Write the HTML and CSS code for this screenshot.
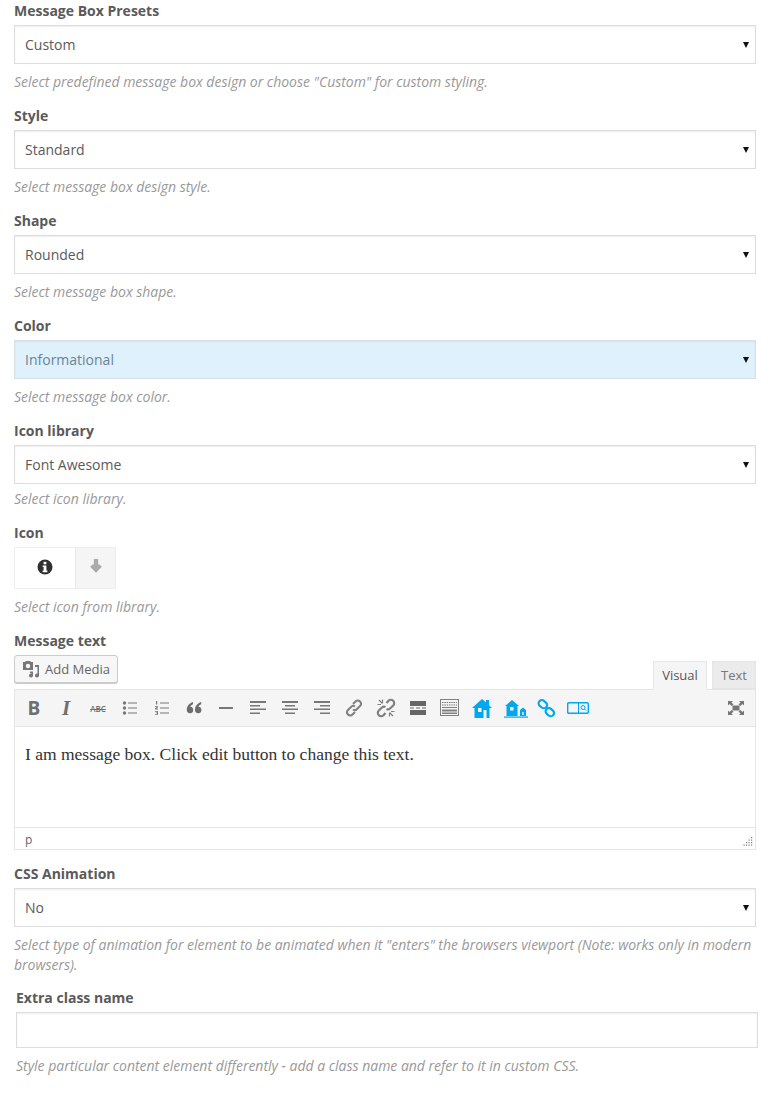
FILE: index.html
```html
<!DOCTYPE html>
<html lang="en">
<head>
    <meta charset="UTF-8">
    <meta name="viewport" content="width=device-width, initial-scale=1.0">
    <title>Message Box Settings</title>
    <link rel="stylesheet" href="styles.css">
</head>
<body>
    <form class="settings">
        <div class="field">
            <div class="label">Message Box Presets</div>
            <div class="select"><span>Custom</span><i class="caret"></i></div>
            <div class="hint">Select predefined message box design or choose "Custom" for custom styling.</div>
        </div>
        <div class="field">
            <div class="label">Style</div>
            <div class="select"><span>Standard</span><i class="caret"></i></div>
            <div class="hint">Select message box design style.</div>
        </div>
        <div class="field">
            <div class="label">Shape</div>
            <div class="select"><span>Rounded</span><i class="caret"></i></div>
            <div class="hint">Select message box shape.</div>
        </div>
        <div class="field">
            <div class="label">Color</div>
            <div class="select select_info"><span>Informational</span><i class="caret"></i></div>
            <div class="hint">Select message box color.</div>
        </div>
        <div class="field">
            <div class="label">Icon library</div>
            <div class="select"><span>Font Awesome</span><i class="caret"></i></div>
            <div class="hint hint_tight">Select icon library.</div>
        </div>
        <div class="field">
            <div class="label">Icon</div>
            <div class="icon_picker">
                <div class="icon_current">
                    <svg width="16" height="16" viewBox="0 0 16 16"><circle cx="8" cy="8" r="7.5" fill="#2f2f2f"/><rect x="6.6" y="2.8" width="2.8" height="2.5" fill="#fff"/><path d="M5.6 6.4h3.8v5.2h1v1.6H5.6v-1.6h1V8h-1z" fill="#fff"/></svg>
                </div>
                <div class="icon_toggle">
                    <svg width="16" height="16" viewBox="0 0 16 16"><path d="M5.8 1h4.400v5.500h1.300l2.300 2.300L8 14.800 2.200 8.800l2.300-2.300h1.300z" fill="#aaa"/></svg>
                </div>
            </div>
            <div class="hint">Select icon from library.</div>
        </div>
        <div class="field field_editor">
            <div class="label">Message text</div>
            <div class="editor_top">
                <button class="media_button" type="button">
                    <svg width="18" height="18" viewBox="0 0 18 18"><path d="M1 2h2l1-1h4l1 1h2v8H1z" fill="#777"/><circle cx="6" cy="6" r="2.2" fill="#f7f7f7"/><path d="M13 5h4v10.5a2 2 0 1 1-1.5-1.9V7h-2.500z" fill="#777"/><path d="M8 11.500h3v4a2 2 0 1 1-1.500-1.900V13H8z" fill="#777"/></svg>
                    Add Media
                </button>
                <div class="tabs">
                    <div class="tab tab_active">Visual</div>
                    <div class="tab">Text</div>
                </div>
            </div>
            <div class="editor">
                <div class="toolbar">
                    <span class="tool tool_b">B</span>
                    <span class="tool tool_i">I</span>
                    <span class="tool tool_abc">ABC</span>
                    <span class="tool"><svg width="16" height="16" viewBox="0 0 16 16" fill="#777"><circle cx="2.500" cy="3" r="1.700"/><circle cx="2.500" cy="8" r="1.700"/><circle cx="2.500" cy="13" r="1.700"/><path d="M6 2.500h9v1H6zM6 7.500h9v1H6zM6 12.500h9v1H6z"/></svg></span>
                    <span class="tool"><svg width="16" height="16" viewBox="0 0 16 16" fill="#777"><path d="M2 1h1.200v3.600H2zM1 6.200h3v1L2.400 8.600H4v.8H1v-.8l1.800-1.500V7H1zM1 11h3v3.800H1V14h2v-.8H1.800v-.6H3V11.800H1z"/><path d="M6 2.500h9v1H6zM6 7.500h9v1H6zM6 12.500h9v1H6z"/></svg></span>
                    <span class="tool"><svg width="16" height="14" viewBox="0 0 16 14" fill="#6c6c6c"><path d="M7 1C3.300 2.200.8 5 .8 9a3.200 3.200 0 1 0 3.400-3.200c.3-1 1.300-2 2.800-2.600zM15.200 1C11.500 2.200 9 5 9 9a3.200 3.200 0 1 0 3.400-3.200c.3-1 1.300-2 2.800-2.600z"/></svg></span>
                    <span class="tool"><svg width="14" height="14" viewBox="0 0 14 14" fill="#777"><rect y="6" width="14" height="2"/></svg></span>
                    <span class="tool"><svg width="16" height="14" viewBox="0 0 16 14" fill="#777"><path d="M0 0h16v2H0zM0 4h10v1.500H0zM0 7.500h16v1.500H0zM0 11.500h10V13H0z"/></svg></span>
                    <span class="tool"><svg width="16" height="14" viewBox="0 0 16 14" fill="#777"><path d="M0 0h16v2H0zM3 4h10v1.500H3zM0 7.500h16v1.500H0zM3 11.500h10V13H3z"/></svg></span>
                    <span class="tool"><svg width="16" height="14" viewBox="0 0 16 14" fill="#777"><path d="M0 0h16v2H0zM6 4h10v1.500H6zM0 7.500h16v1.500H0zM6 11.500h10V13H6z"/></svg></span>
                    <span class="tool"><svg width="18" height="18" viewBox="0 0 18 18" fill="none" stroke="#808080" stroke-width="2"><path d="M8 5l2.500-2.500a3 3 0 0 1 4.500 0 3.200 3.200 0 0 1 0 4.500L12 10a3 3 0 0 1-4 .5"/><path d="M10 13l-2.500 2.500a3 3 0 0 1-4.500 0 3.200 3.200 0 0 1 0-4.500L6 8a3 3 0 0 1 4-.5"/></svg></span>
                    <span class="tool"><svg width="20" height="20" viewBox="0 0 20 20" fill="none" stroke="#808080" stroke-width="2.200"><path d="M10.500 5l2-2.200a3.200 3.200 0 0 1 4.700 0 3.300 3.300 0 0 1 0 4.700L14 10.500a3 3 0 0 1-3.500.5"/><path d="M9.500 15l-2 2.200a3.200 3.200 0 0 1-4.700 0 3.300 3.300 0 0 1 0-4.700L6 9.500A3 3 0 0 1 9.500 9"/><path d="M3 2l3.500 3.500M1.500 6.500h3.500M6.500 1.500V5M17 18l-3.500-3.500M18.500 13.500H15M13.500 18.500V15" stroke-width="1.200"/></svg></span>
                    <span class="tool"><svg width="16" height="14" viewBox="0 0 16 14" fill="#666"><path d="M0 0h16v5H0zM0 9h16v5H0zM0 6.500h4v1H0zM6 6.500h4v1H6zM12 6.500h4v1h-4z"/></svg></span>
                    <span class="tool"><svg width="20" height="18" viewBox="0 0 20 18"><rect x=".5" y=".5" width="18" height="16" fill="none" stroke="#808080"/><path d="M2 3.500h15M2 6h15" stroke="#777" stroke-dasharray="1.500 .8" fill="none"/><path d="M2 8h15v1H2z" fill="#808080"/><path d="M2 10.500h15v2H2zM2 13.500h15V15H2z" fill="#808080"/></svg></span>
                    <span class="tool tool_blue"><svg width="20" height="19" viewBox="0 0 20 19" fill="#00a8ef"><path d="M10 0L0 9h2.500v10h15V9H20l-3-2.700V1h-3v2.600zM6 9h3.500v4H6zM11.500 11h3v8h-3z" fill-rule="evenodd"/></svg></span>
                    <span class="tool tool_blue tool_home2"><svg width="24" height="19" viewBox="0 0 24 19" fill="#00a8ef"><path d="M8 1L1 7h1.500v10h11V7H15zM6 8h3.500v3.500H6zM16 11l3-2.500 3 2.500v6h-6zM18.300 13v3h1.400v-3z" fill-rule="evenodd"/><rect y="17.500" width="24" height="1.200"/></svg></span>
                    <span class="tool tool_blue"><svg width="19" height="19" viewBox="0 0 19 19" fill="none" stroke="#00a8ef" stroke-width="2.200"><rect x="1.500" y="2" width="9" height="6.500" rx="3.200" transform="rotate(40 6 5)"/><rect x="8.500" y="10" width="9" height="6.500" rx="3.200" transform="rotate(40 13 13)"/></svg></span>
                    <span class="tool tool_blue"><svg width="22" height="12" viewBox="0 0 22 12" fill="none" stroke="#00a8ef"><rect x=".7" y=".7" width="20.600" height="10.600" rx="1" stroke-width="1.400"/><path d="M11.500 1v10" stroke-width="1"/><circle cx="16" cy="5.500" r="2" stroke-width="1"/><path d="M17.500 7l1.500 1.500" stroke-width="1"/></svg></span>
                    <span class="tool tool_full"><svg width="16" height="14" viewBox="0 0 16 14" fill="#777"><rect x="4.500" y="4.500" width="7" height="5"/><path d="M0 0h5L3.500 1.500 5.500 3.500 3.500 5 1.500 3 0 4.500zM16 0h-5l1.500 1.500-2 2L12.500 5l2-2L16 4.500zM0 14h5l-1.500-1.500 2-2L3.500 9l-2 2L0 9.500zM16 14h-5l1.500-1.500-2-2L12.500 9l2 2L16 9.500z"/></svg></span>
                </div>
                <div class="editor_body">I am message box. Click edit button to change this text.</div>
                <div class="status_bar">
                    <span>p</span>
                    <svg class="grip" width="10" height="10" viewBox="0 0 10 10" fill="#8a7a86"><path d="M8 0h1.200v1.200H8zM8 2.500h1.200v1.200H8zM5.500 2.500h1.200v1.200H5.500zM8 5h1.200v1.200H8zM5.500 5h1.200v1.200H5.500zM3 5h1.200v1.200H3zM8 7.500h1.200v1.200H8zM5.500 7.500h1.200v1.200H5.500zM3 7.500h1.200v1.200H3zM.5 7.500h1.200v1.200H.5z"/></svg>
                </div>
            </div>
        </div>
        <div class="field field_animation">
            <div class="label">CSS Animation</div>
            <div class="select"><span>No</span><i class="caret"></i></div>
            <div class="hint">Select type of animation for element to be animated when it "enters" the browsers viewport (Note: works only in modern browsers).</div>
        </div>
        <div class="field field_extra">
            <div class="label">Extra class name</div>
            <div class="text_input"></div>
            <div class="hint">Style particular content element differently - add a class name and refer to it in custom CSS.</div>
        </div>
    </form>
</body>
</html>
```

FILE: styles.css
```css
html, body {
    margin: 0;
    padding: 0;
    background: #fff;
}
body {
    font-family: "Open Sans", sans-serif;
    font-size: 14px;
    color: #5a5a5a;
}
.settings {
    display: flex;
    flex-direction: column;
    gap: 16px;
    padding: 2px 13px 0 14px;
    height: 1094px;
    box-sizing: border-box;
    overflow: hidden;
}
.label {
    font-weight: 700;
    line-height: 18px;
    margin-bottom: 5px;
}
.hint {
    font-style: italic;
    color: #999;
    letter-spacing: -0.015px;
    line-height: 20px;
    margin-top: 8px;
    margin-bottom: -1px;
}
.hint_tight {
    margin-top: 5px;
}
.select {
    display: flex;
    align-items: center;
    justify-content: space-between;
    height: 39px;
    box-sizing: border-box;
    padding: 0 6px 0 10px;
    border: 1px solid #ddd;
    box-shadow: inset 0 1px 2px rgba(0, 0, 0, 0.07);
    background: #fff;
}
.select_info {
    background: #dff1fd;
    color: #6a8496;
    border-color: #d8e0e6;
}
.caret {
    width: 0;
    height: 0;
    border-left: 3px solid transparent;
    border-right: 3px solid transparent;
    border-top: 6px solid #111;
}

.icon_picker {
    display: flex;
    width: 102px;
    height: 42px;
    box-sizing: border-box;
    border: 1px solid #eee;
}
.icon_current {
    width: 60px;
    display: flex;
    align-items: center;
    justify-content: center;
    background: #fff;
    border-right: 1px solid #e8e8e8;
}
.icon_current svg {
    margin-bottom: 2px;
}
.icon_toggle {
    flex: 1;
    display: flex;
    align-items: center;
    justify-content: center;
    background: #f5f5f5;
}
.icon_toggle svg {
    margin-bottom: 4px;
}

.editor_top {
    display: flex;
    justify-content: space-between;
    align-items: flex-end;
    height: 34px;
}
.media_button {
    display: flex;
    align-items: center;
    gap: 5px;
    align-self: flex-start;
    width: 104px;
    height: 28px;
    box-sizing: border-box;
    padding: 0 0 0 7px;
    border: 1px solid #ccc;
    border-radius: 3px;
    background: #f7f7f7;
    box-shadow: 0 1px 0 #ccc;
    font-family: inherit;
    font-size: 13px;
    color: #666;
}
.tabs {
    display: flex;
    gap: 5px;
    margin-bottom: -1px;
    position: relative;
}
.tab {
    width: 44px;
    height: 28px;
    box-sizing: border-box;
    border: 1px solid #e5e5e5;
    background: #ebebeb;
    color: #777;
    font-size: 13px;
    line-height: 27px;
    text-align: center;
}
.tab_active {
    width: 54px;
    height: 29px;
    background: #f5f5f5;
    border-bottom-color: #f5f5f5;
    color: #555;
}
.editor {
    border: 1px solid #e5e5e5;
    height: 161px;
    box-sizing: border-box;
    display: flex;
    flex-direction: column;
}
.toolbar {
    display: flex;
    align-items: center;
    height: 37px;
    padding-left: 3px;
    background: #f5f5f5;
    border-bottom: 1px solid #e5e5e5;
    box-sizing: border-box;
    flex: none;
}
.tool {
    width: 32px;
    flex: none;
    display: flex;
    justify-content: center;
    align-items: center;
    color: #6f6f6f;
}
.tool_b {
    font-weight: 700;
    font-size: 19px;
}
.tool_i {
    font-family: "Liberation Serif", serif;
    font-style: italic;
    font-weight: 700;
    font-size: 21px;
}
.tool_abc {
    font-size: 8px;
    font-weight: 600;
    text-decoration: line-through;
}
.tool_home2 {
    padding-left: 3px;
    box-sizing: border-box;
}
.tool_full {
    margin-left: auto;
    margin-right: 3px;
}
.editor_body {
    flex: 1;
    padding: 16px 10px 0;
    font-family: "Liberation Serif", serif;
    font-size: 17.5px;
    line-height: 22px;
    color: #333;
}
.status_bar {
    display: flex;
    justify-content: space-between;
    align-items: flex-end;
    height: 22px;
    padding: 0 2px 0 10px;
    border-top: 1px solid #e5e5e5;
    box-sizing: border-box;
    font-size: 12px;
    line-height: 19px;
    color: #666;
    flex: none;
}
.grip {
    margin-bottom: 2px;
}
.field_animation {
    margin-top: -1px;
}
.field_extra {
    margin: -1px -2px 0 2px;
}
.text_input {
    height: 36px;
    box-sizing: border-box;
    border: 1px solid #ddd;
    box-shadow: inset 0 1px 2px rgba(0, 0, 0, 0.07);
}
```
